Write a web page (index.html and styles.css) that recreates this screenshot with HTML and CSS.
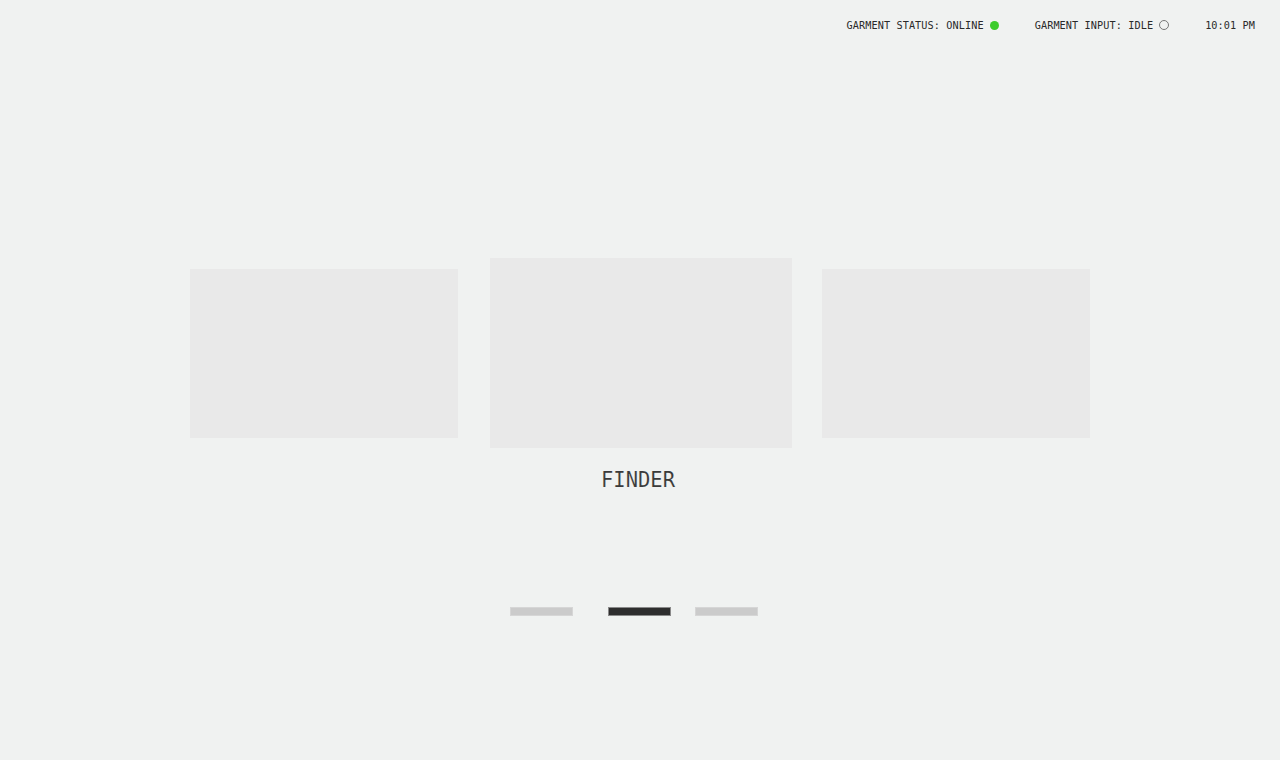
FILE: index.html
```html
<!DOCTYPE html>
<html lang="en">
<head>
<meta charset="utf-8">
<title>Finder</title>
<link rel="stylesheet" href="styles.css">
</head>
<body>
<header class="statusbar">
  <div class="status-item">
    <span class="status-label">GARMENT STATUS: ONLINE</span>
    <span class="dot dot-online"></span>
  </div>
  <div class="status-item">
    <span class="status-label">GARMENT INPUT: IDLE</span>
    <span class="dot dot-idle"></span>
  </div>
  <div class="status-item">
    <span class="status-label">10:01 PM</span>
  </div>
</header>
<main class="stage">
  <div class="carousel">
    <div class="card card-side"></div>
    <div class="card card-active"></div>
    <div class="card card-side card-right"></div>
  </div>
  <div class="caption">FINDER</div>
  <div class="pager">
    <span class="pip"></span>
    <span class="pip pip-active"></span>
    <span class="pip pip-last"></span>
  </div>
</main>
</body>
</html>
```
FILE: styles.css
```css
* { box-sizing: border-box; }
html, body {
  margin: 0;
  padding: 0;
  background: #f0f2f1;
  width: 1280px;
  height: 760px;
  overflow: hidden;
  font-family: "DejaVu Sans Mono", "Liberation Mono", monospace;
  color: #2e2e2e;
}
.statusbar {
  display: flex;
  justify-content: flex-end;
  align-items: center;
  height: 50px;
  padding-right: 25px;
  padding-top: 2px;
  gap: 36px;
}
.status-item {
  display: flex;
  align-items: center;
  gap: 6px;
}
.status-label {
  font-size: 10.2px;
  line-height: 12px;
  letter-spacing: 0.1px;
  color: #2a2a2a;
}
.dot {
  width: 10px;
  height: 10px;
  border-radius: 50%;
  margin-top: -2px;
}
.dot-online {
  background: #3ccc2c;
  width: 9px;
  height: 9px;
}
.dot-idle {
  border: 1px solid #777;
  background: transparent;
}
.stage {
  display: flex;
  flex-direction: column;
  align-items: center;
  padding-top: 208px;
}
.carousel {
  display: flex;
  align-items: center;
  width: 900px;
}
.card {
  background: #e9e9e9;
}
.card-side {
  width: 268px;
  height: 169px;
}
.card-active {
  width: 302px;
  height: 190px;
  margin: 0 30px 0 32px;
}
.caption {
  margin-top: 18px;
  font-size: 20.5px;
  line-height: 28px;
  color: #3a3a3a;
  margin-left: -4px;
  -webkit-text-stroke: 0.1px #f0f2f1;
}
.pager {
  display: flex;
  align-items: center;
  margin-top: 113px;
  margin-left: -12px;
}
.pip {
  width: 63px;
  height: 9px;
  background: #cbcbcb;
  border: 1px solid #d6d6d6;
}
.pip-active {
  background: #2e2e2e;
  border-color: #8a8a8a;
  margin: 0 24px 0 35px;
}
```
